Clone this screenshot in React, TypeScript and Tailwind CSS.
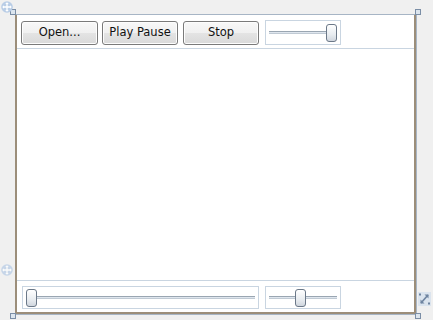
import React from 'react'

function Btn({ label, w }: { label: string; w: string }) {
  return (
    <button
      className={`${w} h-[24px] rounded-[3px] border border-[#7a7a7a] bg-[linear-gradient(to_bottom,#f8f8f8_0%,#f0f0f0_50%,#e4e4e4_50%,#d9d9d9_100%)] shadow-[inset_0_0_0_1px_#fdfdfd] text-[#111] leading-none flex items-center justify-center`}
      style={{ fontFamily: 'Tahoma, "DejaVu Sans", sans-serif', fontSize: '11.5px' }}
    >
      {label}
    </button>
  )
}

function Slider({ w, pos }: { w: string; pos: number }) {
  return (
    <div className={`${w} h-full border border-[#c9d5e1] bg-white flex items-center px-[3px]`}>
      <div className="relative flex-1 h-[18px] flex items-center">
        <div className="w-full h-[3px] border-t border-[#9aa6b2] bg-[#dfe6ee] border-b border-b-[#c0cad4]" />
        <div
          className="absolute top-0 w-[11px] h-[18px] rounded-[3px] border border-[#6b7888] bg-[linear-gradient(to_bottom,#ffffff,#e8ecf0_60%,#d0d6de)]"
          style={{ left: `calc(${pos * 100}% - ${pos * 11}px)` }}
        />
      </div>
    </div>
  )
}

function Handle({ cls }: { cls: string }) {
  return <div className={`absolute w-[6px] h-[6px] border border-[#7b8ea6] bg-[#dce5ee] ${cls}`} />
}

function MoveIcon({ cls, faded }: { cls: string; faded?: boolean }) {
  return (
    <svg className={`absolute ${cls}`} width="12" height="12" viewBox="0 0 12 12" opacity={faded ? 0.75 : 1}>
      <circle cx="6" cy="6" r="5.8" fill="#b9cde6" />
      <path d="M6 2.5v7M2.5 6h7" stroke="#fff" strokeWidth="1.3" />
      <path d="M6 1.2l-1.8 1.8h3.6zM6 10.8l-1.8-1.8h3.6zM1.2 6l1.8-1.8v3.6zM10.8 6l-1.8-1.8v3.6z" fill="#fff" />
    </svg>
  )
}

export default function App() {
  return (
    <div className="relative w-[433px] h-[320px] bg-[#f0f0f0] pl-[15px] pt-[14px] overflow-hidden">
      <div className="w-[402px] h-[301px] border-t border-r border-b border-[#a7b5c5]">
        <div className="h-full bg-white border-l-2 border-r-2 border-b-2 border-[#9c8e7a] flex flex-col">
          <div className="h-[34px] border-b border-[#c9d5e1] flex items-end pl-[4px] pb-[3px]">
            <Btn label="Open..." w="w-[77px]" />
            <div className="ml-[4px]">
              <Btn label="Play Pause" w="w-[76px]" />
            </div>
            <div className="ml-[5px]">
              <Btn label="Stop" w="w-[76px]" />
            </div>
            <div className="ml-[6px] h-[25px]">
              <Slider w="w-[76px]" pos={1} />
            </div>
          </div>
          <div className="flex-1" />
          <div className="h-[32px] border-t border-[#c9d5e1] flex gap-[6px] pl-[5px] pt-[5px] pb-[3px]">
            <div className="h-[23px]">
              <Slider w="w-[237px]" pos={0} />
            </div>
            <div className="h-[23px]">
              <Slider w="w-[76px]" pos={0.46} />
            </div>
          </div>
        </div>
      </div>

      <Handle cls="left-[10px] top-[9px]" />
      <Handle cls="left-[415px] top-[9px]" />
      <Handle cls="left-[10px] top-[313px]" />
      <Handle cls="left-[415px] top-[313px]" />

      <MoveIcon cls="left-[1px] top-[1px]" />
      <MoveIcon cls="left-[1px] top-[264px]" faded />

      <svg className="absolute left-[418px] top-[292px]" width="13" height="14" viewBox="0 0 13 14">
        <rect x="0" y="0" width="13" height="14" fill="#dbe4ee" />
        <path d="M3 11L10 3" stroke="#6f84a0" strokeWidth="1.6" />
        <path d="M10.5 2.5v4l-4-4z" fill="#6f84a0" />
        <path d="M2.5 11.5v-4l4 4z" fill="#6f84a0" />
        <rect x="1" y="1.5" width="2" height="2" fill="#6f84a0" />
        <rect x="10" y="10.5" width="2" height="2" fill="#6f84a0" />
      </svg>
    </div>
  )
}
